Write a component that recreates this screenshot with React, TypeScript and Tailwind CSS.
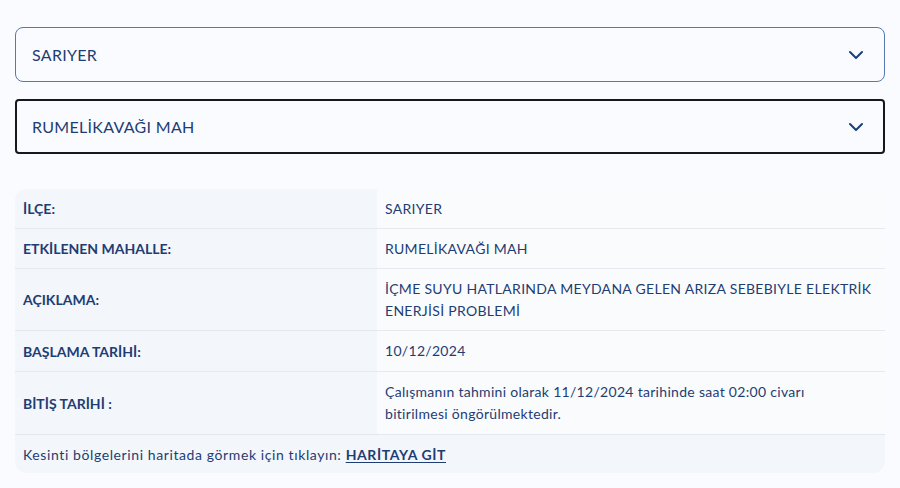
import React from 'react';

const rows: { label: string; value: string; h: string }[] = [
    { label: 'İLÇE:', value: 'SARIYER', h: 'h-[39px]' },
    { label: 'ETKİLENEN MAHALLE:', value: 'RUMELİKAVAĞI MAH', h: 'h-[39px]' },
    { label: 'AÇIKLAMA:', value: 'İÇME SUYU HATLARINDA MEYDANA GELEN ARIZA SEBEBIYLE ELEKTRİK ENERJİSİ PROBLEMİ', h: 'h-[61px]' },
    { label: 'BAŞLAMA TARİHİ:', value: '10/12/2024', h: 'h-[40px]' },
    { label: 'BİTİŞ TARİHİ :', value: 'Çalışmanın tahmini olarak 11/12/2024 tarihinde saat 02:00 civarı\nbitirilmesi öngörülmektedir.', h: 'h-[62px]' },
];

const Chevron = () => (
    <svg width="16" height="10" viewBox="0 0 16 10" fill="none">
        <path d="M2 2l6 6 6-6" stroke="#1b3f7a" strokeWidth="2" strokeLinecap="round" strokeLinejoin="round" />
    </svg>
);

const Select = ({ text, active }: { text: string; active?: boolean }) => (
    <div
        className={
            active
                ? 'h-[55px] flex items-center justify-between pl-[15px] pr-[19px] border-2 border-[#16181d] rounded-[4px] bg-[#fafbfe]'
                : 'h-[55px] flex items-center justify-between pl-[16px] pr-[20px] border border-[#5876b0] rounded-[8px] bg-[#fafbfe]'
        }
    >
        <span className="text-[16px] tracking-[0.3px] text-[#1e3d73]">{text}</span>
        <Chevron />
    </div>
);

const OutageInfo = () => {
    return (
        <div className="w-[900px] h-[488px] bg-[#f9fbfe] px-[15px] pt-[27px] font-['Lato','Noto_Sans',sans-serif] text-[#1e3d73]">
            <div className="flex flex-col gap-[17px]">
                <Select text="SARIYER" />
                <Select text="RUMELİKAVAĞI MAH" active />
            </div>

            <div className="mt-[35px] rounded-[12px] bg-[#f3f6fb] overflow-hidden text-[14px]">
                {rows.map((r) => (
                    <div key={r.label} className="grid grid-cols-[362px_1fr] border-b border-[#e6e9ef]">
                        <div className={'flex items-center px-[8px] font-bold ' + r.h}>
                            {r.label}
                        </div>
                        <div className="flex items-center pl-[8px] pr-[6px] bg-[#fafbfd] leading-[22px] tracking-[0.3px]">
                            <span className="whitespace-pre-line">{r.value}</span>
                        </div>
                    </div>
                ))}
                <div className="h-[38px] flex items-center px-[8px] tracking-[0.6px]">
                    Kesinti bölgelerini haritada görmek için tıklayın:&nbsp;
                    <a href="#" className="font-bold underline underline-offset-2">HARİTAYA GİT</a>
                </div>
            </div>
        </div>
    );
};

export default function App() {
    return <OutageInfo />;
}
